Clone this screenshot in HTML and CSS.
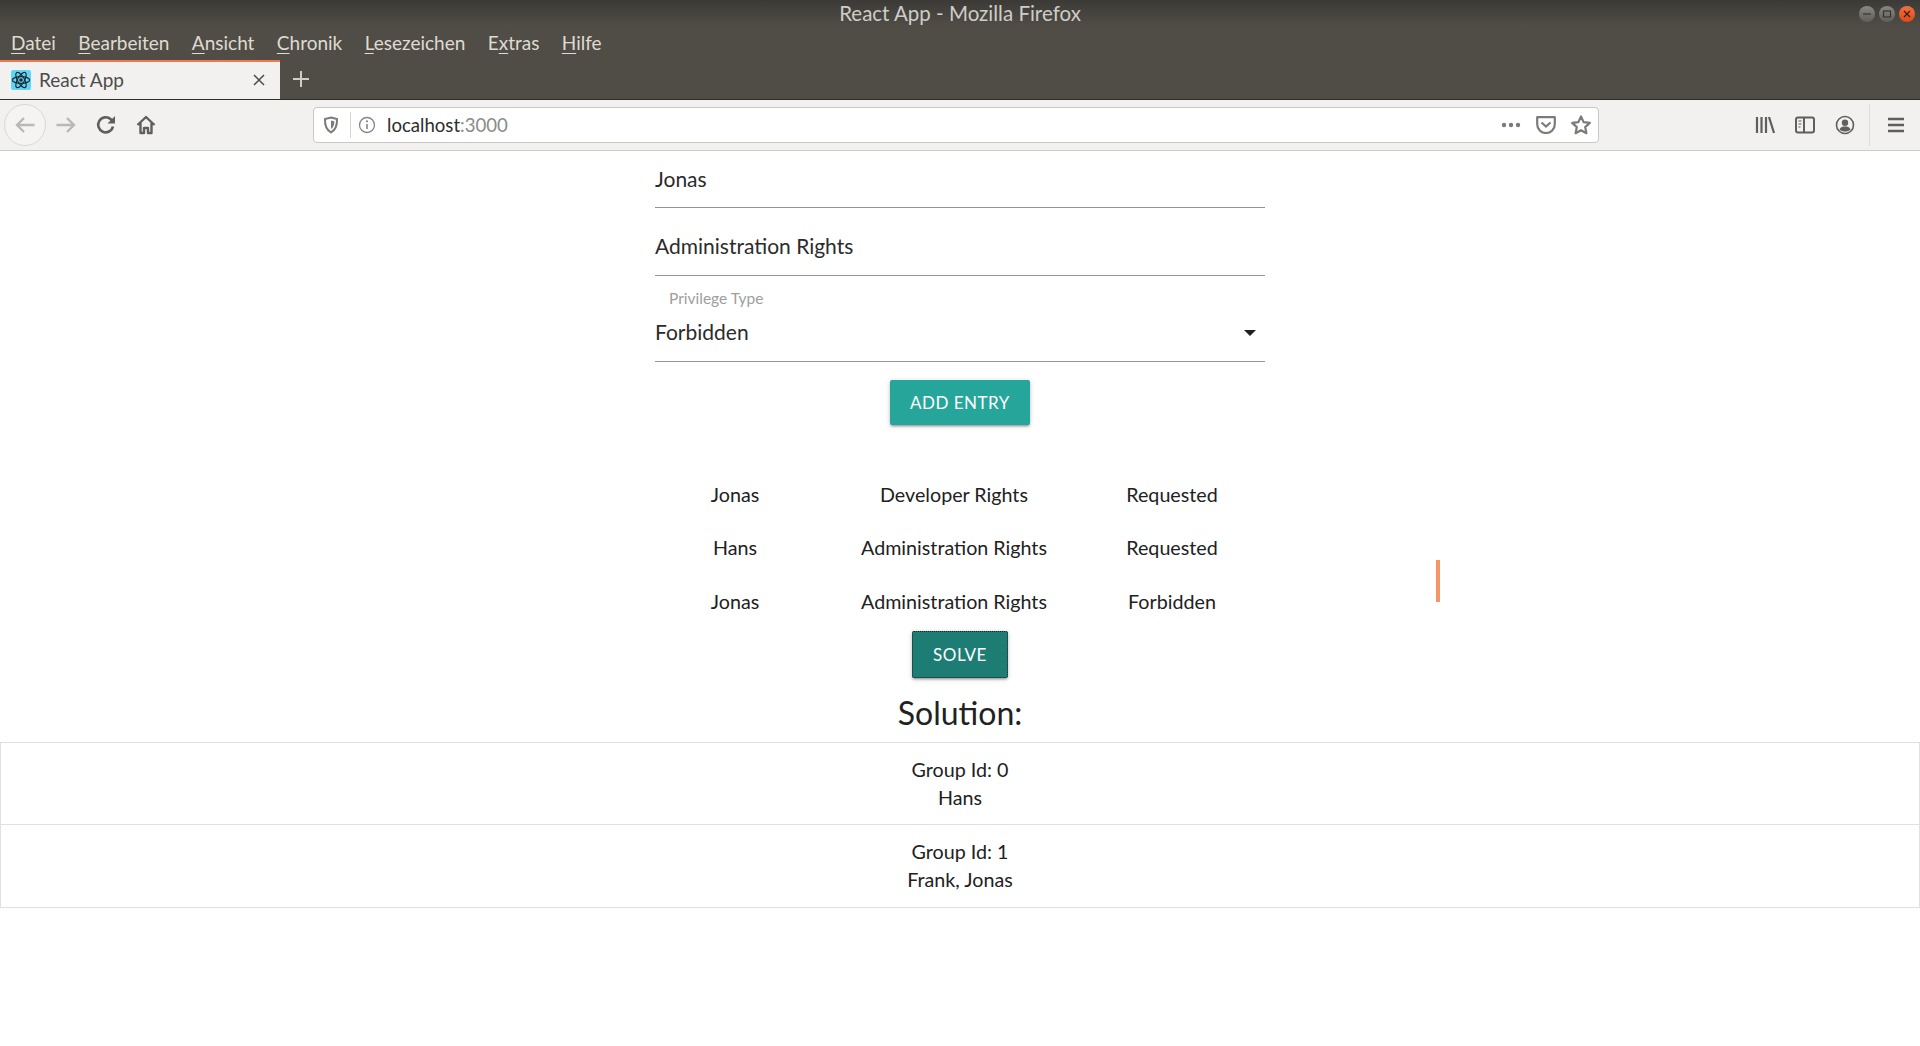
FILE: index.html
```html
<!DOCTYPE html>
<html>
<head>
<meta charset="utf-8">
<title>React App</title>
<link rel="stylesheet" href="styles.css">
</head>
<body>
<header class="browser">
  <div class="titlebar">
    <span class="window-title">React App - Mozilla Firefox</span>
    <div class="window-buttons">
      <span class="win-btn"><svg width="16" height="16" viewBox="0 0 16 16"><path d="M4 8h8" stroke="#35342f" stroke-width="1.2"/></svg></span>
      <span class="win-btn"><svg width="16" height="16" viewBox="0 0 16 16"><rect x="4.5" y="5" width="7" height="6" fill="none" stroke="#35342f" stroke-width="1.2"/></svg></span>
      <span class="win-btn win-close"><svg width="16" height="16" viewBox="0 0 16 16"><path d="M5 5l6 6M11 5l-6 6" stroke="#3c1c10" stroke-width="1.3"/></svg></span>
    </div>
  </div>
  <nav class="menubar">
    <span><u>D</u>atei</span>
    <span><u>B</u>earbeiten</span>
    <span><u>A</u>nsicht</span>
    <span><u>C</u>hronik</span>
    <span><u>L</u>esezeichen</span>
    <span>E<u>x</u>tras</span>
    <span><u>H</u>ilfe</span>
  </nav>
  <div class="tabbar">
    <div class="tab">
      <svg class="favicon" width="20" height="20" viewBox="0 0 20 20">
        <rect width="20" height="20" rx="2" fill="#5fd6f8"/>
        <g fill="none" stroke="#1c2b33" stroke-width="1.2">
          <ellipse cx="10" cy="10" rx="8.6" ry="3.4"/>
          <ellipse cx="10" cy="10" rx="8.6" ry="3.4" transform="rotate(60 10 10)"/>
          <ellipse cx="10" cy="10" rx="8.6" ry="3.4" transform="rotate(120 10 10)"/>
        </g>
        <circle cx="10" cy="10" r="1.8" fill="#1c2b33"/>
      </svg>
      <span class="tab-title">React App</span>
      <svg class="tab-close" width="14" height="14" viewBox="0 0 14 14"><path d="M2 2l10 10M12 2L2 12" stroke="#4a4a48" stroke-width="1.5"/></svg>
    </div>
    <svg class="new-tab" width="18" height="18" viewBox="0 0 18 18"><path d="M9 1v16M1 9h16" stroke="#cfcdc7" stroke-width="2"/></svg>
  </div>
  <div class="toolbar">
    <span class="back-btn">
      <svg width="20" height="20" viewBox="0 0 20 20"><path d="M19.500 10H2M9 3L2 10l7 7" fill="none" stroke="#b9b8b6" stroke-width="2.400"/></svg>
    </span>
    <svg class="forward" width="20" height="20" viewBox="0 0 20 20"><path d="M.5 10H18M11 3l7 7-7 7" fill="none" stroke="#b9b8b6" stroke-width="2.400"/></svg>
    <svg class="reload" width="20" height="20" viewBox="0 0 20 20"><path d="M17 11.500A7.500 7.500 0 1 1 14.800 4.300L17 6.500" fill="none" stroke="#5f5f5d" stroke-width="2.600"/><path d="M19 1V8.500H11.500z" fill="#5f5f5d"/></svg>
    <svg class="home" width="20" height="20" viewBox="0 0 20 20"><path d="M1.500 10L10 2l8.500 8M4.500 8v10h3.500v-5h4v5h3.500V8" fill="none" stroke="#5f5f5d" stroke-width="2.400" stroke-linejoin="round"/></svg>
    <div class="urlbar">
      <svg class="shield" width="16" height="18" viewBox="0 0 16 18"><path d="M8 1.500l6 1.500c.3 6-1 10.500-6 13.500C3 13.500 1.700 9 2 3z" fill="none" stroke="#7b7b79" stroke-width="2"/><path d="M8 4.500l3.300.8C11.400 8.800 10.600 11 8 13z" fill="#7b7b79"/></svg>
      <span class="url-sep"></span>
      <svg class="info" width="18" height="18" viewBox="0 0 18 18"><circle cx="9" cy="9" r="7.500" fill="none" stroke="#858583" stroke-width="1.300"/><path d="M9 8v5" stroke="#858583" stroke-width="1.600"/><circle cx="9" cy="5.300" r="1.100" fill="#858583"/></svg>
      <span class="url-text">localhost<span class="url-port">:3000</span></span>
      <svg class="dots" width="20" height="6" viewBox="0 0 20 6"><circle cx="3" cy="3" r="2.200" fill="#7b7b79"/><circle cx="10" cy="3" r="2.200" fill="#7b7b79"/><circle cx="17" cy="3" r="2.200" fill="#7b7b79"/></svg>
      <svg class="pocket" width="20" height="18" viewBox="0 0 20 18"><path d="M1.200 1.200h17.600v7a8.800 8.800 0 0 1-17.600 0z" fill="none" stroke="#7b7b79" stroke-width="2.200" stroke-linejoin="round"/><path d="M5.500 6.500L10 10.500l4.500-4" fill="none" stroke="#7b7b79" stroke-width="2.200"/></svg>
      <svg class="star" width="20" height="20" viewBox="0 0 20 20"><path d="M10 1.500l2.600 5.600 6.200.8-4.600 4.200 1.200 6.100L10 15.200l-5.400 3 1.200-6.100L1.200 7.900l6.200-.8z" fill="none" stroke="#7b7b79" stroke-width="2.200" stroke-linejoin="round"/></svg>
    </div>
    <div class="toolbar-right">
      <svg width="20" height="18" viewBox="0 0 20 18"><path d="M2 1v16M6.500 1v16M11 1v16M14 1l5 16" fill="none" stroke="#5f5f5d" stroke-width="2.200"/></svg>
      <svg width="20" height="18" viewBox="0 0 20 18"><rect x="1" y="1.500" width="18" height="15" rx="2" fill="none" stroke="#5f5f5d" stroke-width="2"/><path d="M9 1.500v15" stroke="#5f5f5d" stroke-width="2"/><path d="M3.500 5h3M3.500 8h3M3.500 11h2" stroke="#5f5f5d" stroke-width="1.200"/></svg>
      <svg width="20" height="20" viewBox="0 0 20 20"><circle cx="10" cy="10" r="8.500" fill="none" stroke="#5f5f5d" stroke-width="1.600"/><circle cx="10" cy="7.800" r="3.200" fill="#5f5f5d"/><path d="M4.500 14.500c1-2.500 3-3 5.500-3s4.500.5 5.500 3c-1.500 1.500-3.500 2-5.500 2s-4-.5-5.500-2z" fill="#5f5f5d"/></svg>
      <span class="toolbar-sep"></span>
      <svg width="16" height="16" viewBox="0 0 16 16"><path d="M0 2h16M0 8h16M0 14h16" stroke="#5f5f5d" stroke-width="2.400"/></svg>
    </div>
  </div>
</header>

<main class="page">
  <div class="form">
    <div class="field field-first">Jonas</div>
    <div class="field">Administration Rights</div>
    <div class="field-select">
      <label class="select-label">Privilege Type</label>
      <div class="select-value">Forbidden<span class="select-arrow"></span></div>
    </div>
  </div>
  <button class="btn btn-add">ADD ENTRY</button>

  <div class="entries">
    <div>Jonas</div><div>Developer Rights</div><div>Requested</div>
    <div>Hans</div><div>Administration Rights</div><div>Requested</div>
    <div>Jonas</div><div>Administration Rights</div><div>Forbidden</div>
  </div>

  <button class="btn btn-solve">SOLVE</button>
  <h2 class="solution-title">Solution:</h2>

  <div class="groups">
    <div class="group">Group Id: 0<br>Hans</div>
    <div class="group">Group Id: 1<br>Frank, Jonas</div>
  </div>
</main>
<div class="scroll-mark"></div>
</body>
</html>
```

FILE: styles.css
```css
html, body {
  margin: 0;
  height: 100%;
  background: #fff;
  overflow: hidden;
}
body {
  font-family: Lato, "Open Sans", sans-serif;
  color: #212121;
}

/* browser chrome */
.browser {
  background: linear-gradient(#3b3a36 0, #504d46 26px, #504d46 100%);
  font-family: Lato, sans-serif;
}
.titlebar {
  height: 26px;
  display: flex;
  align-items: center;
  justify-content: center;
  position: relative;
}
.window-title {
  color: #cfcdc7;
  font-size: 20.5px;
}
.window-buttons {
  position: absolute;
  right: 5px;
  top: 6px;
  display: flex;
  gap: 4px;
}
.win-btn {
  width: 16px;
  height: 16px;
  border-radius: 50%;
  background: linear-gradient(#8a8883, #5f5d57);
  display: block;
}
.win-close {
  background: linear-gradient(#f0713f, #de4a14);
}
.menubar {
  height: 33px;
  display: flex;
  align-items: center;
  padding-left: 11px;
  gap: 22.400px;
  color: #dfdbd2;
  font-size: 19px;
}
.menubar u {
  text-underline-offset: 3px;
}
.tabbar {
  height: 41px;
  box-sizing: border-box;
  display: flex;
  align-items: flex-end;
  border-bottom: 1px solid #2f2e2a;
}
.tab {
  width: 280px;
  height: 39px;
  box-sizing: border-box;
  background: #f2f1ef;
  border-top: 2px solid #f0774e;
  display: flex;
  align-items: center;
  padding: 0 14px 2px 11px;
}
.tab-title {
  margin-left: 8px;
  font-size: 19px;
  color: #4c4c4a;
  flex: 1;
}
.new-tab {
  margin: 0 0 11px 12px;
}
.toolbar {
  height: 51px;
  box-sizing: border-box;
  background: #f2f1ef;
  border-bottom: 1px solid #cfccc6;
  display: flex;
  align-items: center;
  padding-left: 4px;
}
.back-btn {
  width: 42px;
  height: 42px;
  box-sizing: border-box;
  border: 1px solid #d9d8d5;
  border-radius: 50%;
  background: #f5f4f3;
  display: flex;
  align-items: center;
  justify-content: center;
}
.forward { margin-left: 10px; }
.reload { margin-left: 20px; }
.home { margin-left: 20px; }
.urlbar {
  width: 1286px;
  height: 36px;
  box-sizing: border-box;
  margin-left: 157px;
  background: #fff;
  border: 1px solid #c9c7c3;
  border-radius: 4px;
  display: flex;
  align-items: center;
  padding: 0 7px 0 9px;
}
.url-sep {
  width: 1px;
  height: 26px;
  background: #d5d4d1;
  margin-left: 11px;
}
.info { margin-left: 7px; }
.url-text {
  margin-left: 11px;
  font-size: 18.600px;
  color: #2d2d2c;
  flex: 1;
}
.url-port { color: #8b8b89; }
.pocket { margin-left: 15px; }
.star { margin-left: 15px; }
.toolbar-right {
  display: flex;
  align-items: center;
  margin-left: 156px;
  gap: 20px;
}
.toolbar-sep {
  width: 1px;
  height: 42px;
  background: #dcdbd8;
  margin: 0 -2px 0 -6px;
}

/* page */
.page {
  display: flex;
  flex-direction: column;
  align-items: center;
}
.form {
  width: 610px;
}
.field {
  height: 47px;
  margin-top: 20px;
  border-bottom: 1px solid #949494;
  font-size: 21px;
  line-height: 36px;
  color: #2b2b2b;
}
.field-first {
  height: 56px;
  margin-top: 0;
  line-height: 55px;
}
.field-select {
  height: 85px;
  border-bottom: 1px solid #949494;
}
.select-label {
  display: block;
  padding: 14px 0 0 14px;
  font-size: 15.500px;
  line-height: 17px;
  color: #9e9e9e;
}
.select-value {
  display: flex;
  justify-content: space-between;
  align-items: center;
  margin-top: 13px;
  font-size: 21px;
  line-height: 24px;
  color: #2b2b2b;
}
.select-arrow {
  width: 0;
  height: 0;
  margin: 1px 9px 0 0;
  border-left: 6px solid transparent;
  border-right: 6px solid transparent;
  border-top: 6px solid #212121;
}
.btn {
  display: block;
  border: 0;
  border-radius: 2px;
  color: #fff;
  font-family: inherit;
  font-size: 17px;
  letter-spacing: 0.5px;
  box-shadow: 0 2px 2px rgba(0,0,0,.14), 0 3px 1px -2px rgba(0,0,0,.12), 0 1px 5px rgba(0,0,0,.2);
}
.btn-add {
  width: 140px;
  height: 45px;
  margin-top: 18px;
  background: #26a69a;
}
.entries {
  width: 610px;
  display: grid;
  grid-template-columns: 160px 278px 158px;
  grid-auto-rows: 53.500px;
  align-items: center;
  justify-items: center;
  margin-top: 42.500px;
  font-size: 19.700px;
}
.btn-solve {
  width: 96px;
  height: 47px;
  margin-top: 2.500px;
  background: #1d7d74;
  outline: 1px dotted #222;
  outline-offset: -1px;
}
.solution-title {
  margin: 15px 0 0;
  font-size: 32px;
  line-height: 40px;
  font-weight: 400;
  color: #212121;
}
.groups {
  width: 100%;
  margin-top: 9px;
  box-sizing: border-box;
  border: 1px solid #e0e0e0;
}
.group {
  height: 82px;
  box-sizing: border-box;
  padding-top: 13px;
  text-align: center;
  font-size: 19.700px;
  line-height: 28px;
  border-bottom: 1px solid #e0e0e0;
}
.group:last-child {
  border-bottom: 0;
}
.scroll-mark {
  position: absolute;
  left: 1436px;
  top: 560px;
  width: 4px;
  height: 42px;
  background: #f79468;
}
```
